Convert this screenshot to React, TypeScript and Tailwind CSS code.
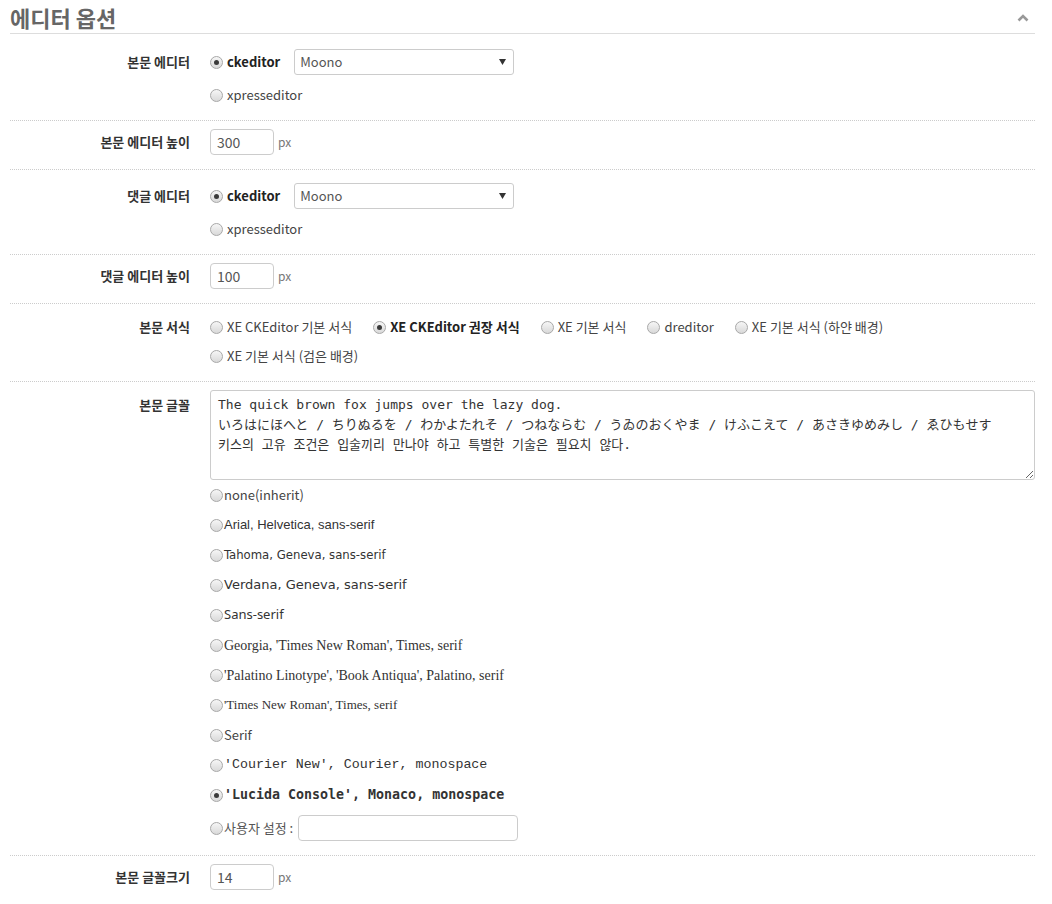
const Radio = ({ checked = false }: { checked?: boolean }) => (
  <span className="inline-flex h-[13px] w-[13px] shrink-0 items-center justify-center rounded-full border border-[#a8a8a8] bg-linear-to-b from-[#f6f6f6] to-[#d9d9d9]">
    {checked ? <span className="h-[5px] w-[5px] rounded-full bg-[#3a3a3a]" /> : null}
  </span>
);

const Choice = ({ label, checked = false }: { label: string; checked?: boolean }) => (
  <label className="flex items-center gap-[4px] whitespace-nowrap">
    <Radio checked={checked} />
    <span className={checked ? "font-bold text-[#222]" : "text-[#444]"}>{label}</span>
  </label>
);

const FakeSelect = () => (
  <div className="ml-[14px] flex h-[26px] w-[220px] items-center justify-between rounded-[3px] border border-[#ccc] bg-white pl-[5px] pr-[7px] text-[13px] text-[#555]">
    <span>Moono</span>
    <svg width="7" height="6" viewBox="0 0 7 6">
      <path d="M0 0h7L3.5 6z" fill="#333" />
    </svg>
  </div>
);

const PxInput = ({ value }: { value: string }) => (
  <div className="flex h-[26px] items-center">
    <input
      className="h-[26px] w-[64px] rounded-[4px] border border-[#ccc] px-[6px] text-[14px] text-[#555] outline-none"
      type="text"
      readOnly
      defaultValue={value}
    />
    <span className="ml-[4px] text-[12px] text-[#777]">px</span>
  </div>
);

const Row = ({
  label,
  labelHeight,
  className,
  children,
}: {
  label: string;
  labelHeight: string;
  className: string;
  children: React.ReactNode;
}) => (
  <div className={`flex ${className}`}>
    <div className={`flex w-[180px] shrink-0 items-center justify-end text-[13px] font-bold text-[#333] ${labelHeight}`}>
      {label}
    </div>
    <div className="ml-[20px] min-w-0 flex-1">{children}</div>
  </div>
);

const fonts: { label: string; cls: string; checked?: boolean }[] = [
  { label: "none(inherit)", cls: "font-['Noto_Sans_CJK_KR',sans-serif] text-[13px] text-[#444]" },
  { label: "Arial, Helvetica, sans-serif", cls: "font-['Liberation_Sans',Arial,sans-serif] text-[13px]" },
  { label: "Tahoma, Geneva, sans-serif", cls: "font-['DejaVu_Sans_Condensed','DejaVu_Sans',sans-serif] text-[13px]" },
  { label: "Verdana, Geneva, sans-serif", cls: "font-['DejaVu_Sans',Verdana,sans-serif] text-[13px]" },
  { label: "Sans-serif", cls: "font-['Noto_Sans',sans-serif] text-[13px]" },
  { label: "Georgia, 'Times New Roman', Times, serif", cls: "font-['Liberation_Serif',serif] text-[14px]" },
  { label: "'Palatino Linotype', 'Book Antiqua', Palatino, serif", cls: "font-['Liberation_Serif',serif] text-[14px]" },
  { label: "'Times New Roman', Times, serif", cls: "font-['Liberation_Serif',serif] text-[13px]" },
  { label: "Serif", cls: "font-['Noto_Sans_CJK_KR',sans-serif] text-[13px] text-[#444]" },
  { label: "'Courier New', Courier, monospace", cls: "font-['Liberation_Mono',monospace] text-[13.3px]" },
  { label: "'Lucida Console', Monaco, monospace", cls: "font-['DejaVu_Sans_Mono',monospace] text-[13.3px] font-bold", checked: true },
];

const sample =
  "The quick brown fox jumps over the lazy dog.\n" +
  "いろはにほへと / ちりぬるを / わかよたれそ / つねならむ / うゐのおくやま / けふこえて / あさきゆめみし / ゑひもせす\n" +
  "키스의 고유 조건은 입술끼리 만나야 하고 특별한 기술은 필요치 않다.";

const App = () => {
  return (
    <div className="min-h-[904px] bg-white pl-[10px] pr-[17px] font-['Noto_Sans_CJK_KR',sans-serif] text-[13px] text-[#333]">
      <div className="flex h-[34px] items-center justify-between border-b border-[#ddd] pt-[2px]">
        <h2 className="text-[22px] font-bold text-[#666]">에디터 옵션</h2>
        <svg className="mr-[6px]" width="12" height="8" viewBox="0 0 12 8">
          <path d="M1.5 6.5L6 2l4.5 4.5" fill="none" stroke="#999" strokeWidth="2.6" />
        </svg>
      </div>

      <Row label="본문 에디터" labelHeight="h-[26px]" className="pt-[15px] pb-[12px]">
        <div className="flex flex-col gap-[7px]">
          <div className="flex h-[26px] items-center">
            <Choice label="ckeditor" checked />
            <FakeSelect />
          </div>
          <div className="flex h-[26px] items-center">
            <Choice label="xpresseditor" />
          </div>
        </div>
      </Row>

      <Row label="본문 에디터 높이" labelHeight="h-[26px]" className="border-t border-dotted border-[#ccc] pt-[8px] pb-[14px]">
        <PxInput value="300" />
      </Row>

      <Row label="댓글 에디터" labelHeight="h-[26px]" className="border-t border-dotted border-[#ccc] pt-[13px] pb-[12px]">
        <div className="flex flex-col gap-[7px]">
          <div className="flex h-[26px] items-center">
            <Choice label="ckeditor" checked />
            <FakeSelect />
          </div>
          <div className="flex h-[26px] items-center">
            <Choice label="xpresseditor" />
          </div>
        </div>
      </Row>

      <Row label="댓글 에디터 높이" labelHeight="h-[26px]" className="border-t border-dotted border-[#ccc] pt-[8px] pb-[14px]">
        <PxInput value="100" />
      </Row>

      <Row label="본문 서식" labelHeight="h-[20px]" className="border-t border-dotted border-[#ccc] pt-[13px] pb-[15px]">
        <div className="flex flex-col gap-[9px]">
          <div className="flex h-[20px] items-center gap-[21px]">
            <Choice label="XE CKEditor 기본 서식" />
            <Choice label="XE CKEditor 권장 서식" checked />
            <Choice label="XE 기본 서식" />
            <Choice label="dreditor" />
            <Choice label="XE 기본 서식 (하얀 배경)" />
          </div>
          <div className="flex h-[20px] items-center">
            <Choice label="XE 기본 서식 (검은 배경)" />
          </div>
        </div>
      </Row>

      <Row label="본문 글꼴" labelHeight="h-[30px]" className="border-t border-dotted border-[#ccc] pt-[8px] pb-[12px]">
        <textarea
          className="block h-[90px] w-full rounded-[3px] border border-[#ccc] px-[7px] py-[4px] font-['DejaVu_Sans_Mono','Noto_Sans_CJK_JP',monospace] text-[13px] leading-[20px] text-[#333] outline-none"
          readOnly
          defaultValue={sample}
        />
        <div className="flex flex-col">
          {fonts.map((f) => (
            <label key={f.label} className="flex h-[30px] items-center gap-[1px] whitespace-nowrap">
              <Radio checked={f.checked} />
              <span className={`${f.cls} text-[#333]`}>{f.label}</span>
            </label>
          ))}
          <label className="mt-[3px] flex h-[30px] items-center gap-[1px] whitespace-nowrap">
            <Radio />
            <span className="text-[13px] text-[#555]">사용자 설정 :</span>
            <input
              className="ml-[4px] h-[26px] w-[220px] rounded-[4px] border border-[#ccc] outline-none"
              type="text"
              readOnly
            />
          </label>
        </div>
      </Row>

      <Row label="본문 글꼴크기" labelHeight="h-[26px]" className="border-t border-dotted border-[#ccc] pt-[8px] pb-[12px]">
        <PxInput value="14" />
      </Row>
    </div>
  );
};

export default App;
